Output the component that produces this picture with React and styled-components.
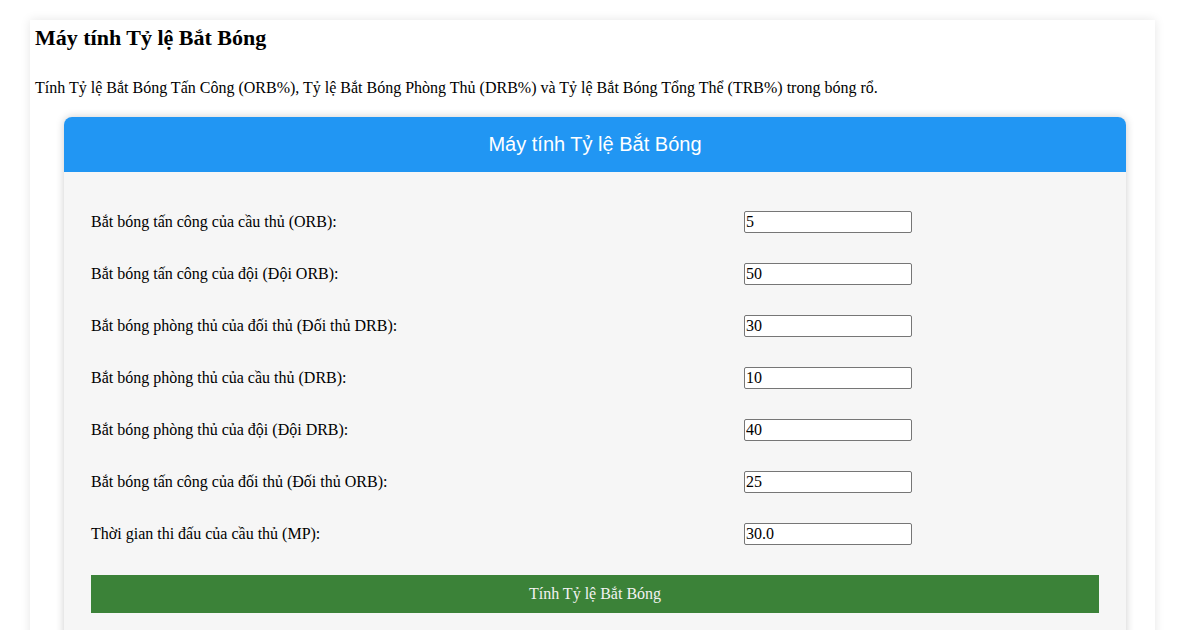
import React, {useState} from 'react';
import styled, {createGlobalStyle} from 'styled-components';

const GlobalStyle = createGlobalStyle`
    html, body {
        margin: 0;
        padding: 0;
        background: #ffffff;
        font-family: "Liberation Serif", "Times New Roman", serif;
        color: #000;
    }
`

const Page = styled.div`
    width: 1125px;
    margin: 20px 30px;
    padding: 5px;
    box-sizing: border-box;
    background: #ffffff;
    box-shadow: 0 0 10px rgba(0, 0, 0, 0.1);
`

const Title = styled.h2`
    font-size: 22px;
    margin: 0 0 28px 0;
    line-height: 26px;
`

const Intro = styled.p`
    font-size: 16px;
    margin: 0 0 20px 0;
    line-height: 18px;
`

const Card = styled.div`
    width: 1062px;
    margin: 0 0 20px 29px;
    border-radius: 8px;
    overflow: hidden;
    background: #f6f6f6;
    box-shadow: 0 0 8px rgba(0, 0, 0, 0.2);
`

const CardHeader = styled.div`
    background: #2196f3;
    color: #ffffff;
    height: 55px;
    display: flex;
    align-items: center;
    justify-content: center;
    font-family: "Liberation Sans", Arial, sans-serif;
    font-size: 20px;
`

const CardBody = styled.form`
    padding: 24px 27px 30px 27px;
    display: flex;
    flex-direction: column;
`

const Row = styled.div`
    display: grid;
    grid-template-columns: 653px 168px;
    align-items: center;
    height: 52px;
    font-size: 16px;
`

const Label = styled.label``

const Field = styled.input`
    width: 168px;
    height: 22px;
    box-sizing: border-box;
    font-family: inherit;
    font-size: 16px;
    padding: 0 1px;
    border: 1px solid #767676;
    border-radius: 2px;
    background: #ffffff;
    color: #000;
`

const Submit = styled.button`
    margin-top: 15px;
    height: 38px;
    width: 100%;
    border: none;
    background: #3b8238;
    color: #f2f2f2;
    font-family: inherit;
    font-size: 16px;
    cursor: pointer;
`

const fields = [
    {id: 'orb', label: 'Bắt bóng tấn công của cầu thủ (ORB):', value: '5'},
    {id: 'team_orb', label: 'Bắt bóng tấn công của đội (Đội ORB):', value: '50'},
    {id: 'opp_drb', label: 'Bắt bóng phòng thủ của đối thủ (Đối thủ DRB):', value: '30'},
    {id: 'drb', label: 'Bắt bóng phòng thủ của cầu thủ (DRB):', value: '10'},
    {id: 'team_drb', label: 'Bắt bóng phòng thủ của đội (Đội DRB):', value: '40'},
    {id: 'opp_orb', label: 'Bắt bóng tấn công của đối thủ (Đối thủ ORB):', value: '25'},
    {id: 'mp', label: 'Thời gian thi đấu của cầu thủ (MP):', value: '30.0'},
]

function App() {
    const [values, setValues] = useState(
        Object.fromEntries(fields.map(f => [f.id, f.value]))
    )

    return (
        <>
            <GlobalStyle/>
            <Page>
                <Title>Máy tính Tỷ lệ Bắt Bóng</Title>
                <Intro>
                    Tính Tỷ lệ Bắt Bóng Tấn Công (ORB%), Tỷ lệ Bắt Bóng Phòng Thủ (DRB%) và Tỷ lệ Bắt Bóng Tổng Thể (TRB%) trong bóng rổ.
                </Intro>
                <Card>
                    <CardHeader>Máy tính Tỷ lệ Bắt Bóng</CardHeader>
                    <CardBody onSubmit={(e) => e.preventDefault()}>
                        {fields.map(f => (
                            <Row key={f.id}>
                                <Label htmlFor={f.id}>{f.label}</Label>
                                <Field
                                    id={f.id}
                                    type="text"
                                    value={values[f.id]}
                                    onChange={(e) => setValues({...values, [f.id]: e.target.value})}
                                />
                            </Row>
                        ))}
                        <Submit type="submit">Tính Tỷ lệ Bắt Bóng</Submit>
                    </CardBody>
                </Card>
            </Page>
        </>
    );
}

export default App
